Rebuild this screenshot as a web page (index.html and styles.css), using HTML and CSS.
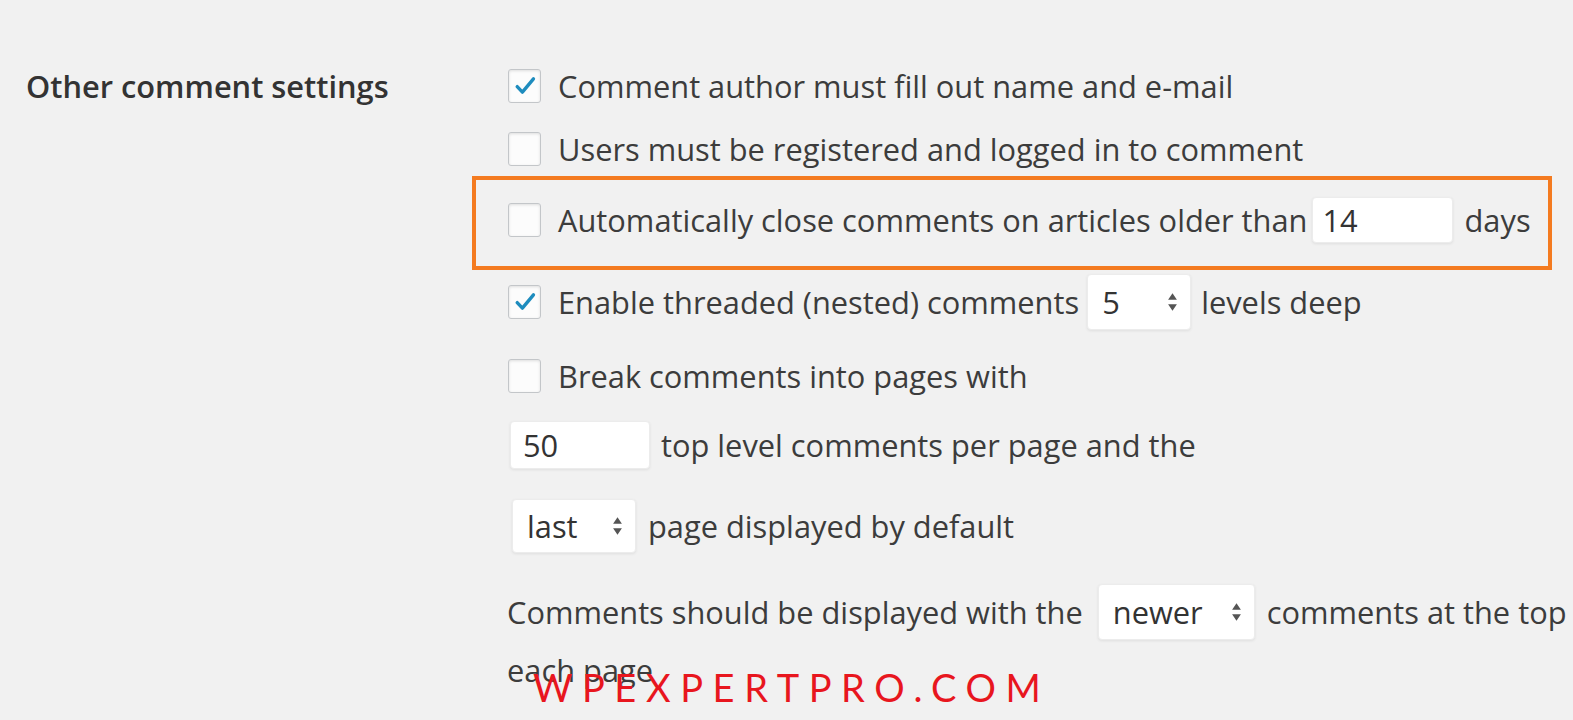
FILE: index.html
```html
<!DOCTYPE html>
<html>
<head>
<meta charset="utf-8">
<link rel="stylesheet" href="styles.css">
</head>
<body>
<div class="page">
  <div class="label-col">Other comment settings</div>
  <div class="field-col">
    <div class="row r1">
      <span class="cb checked"><svg viewBox="0 0 20 20"><path d="M4 10.5l4 4.2L16.5 4.5" fill="none" stroke="#1e8cbe" stroke-width="2.6" stroke-linecap="round" stroke-linejoin="round"/></svg></span>
      <span class="txt">Comment author must fill out name and e-mail</span>
    </div>
    <div class="row r2">
      <span class="cb"></span>
      <span class="txt">Users must be registered and logged in to comment</span>
    </div>
    <div class="highlight">
      <div class="row r3">
        <span class="cb"></span>
        <span class="txt">Automatically close comments on articles older than</span>
        <span class="input in14">14</span>
        <span class="txt days">days</span>
      </div>
    </div>
    <div class="row r4">
      <span class="cb checked"><svg viewBox="0 0 20 20"><path d="M4 10.5l4 4.2L16.5 4.5" fill="none" stroke="#1e8cbe" stroke-width="2.6" stroke-linecap="round" stroke-linejoin="round"/></svg></span>
      <span class="txt">Enable threaded (nested) comments</span>
      <span class="select sel5">5<span class="arrows"><svg viewBox="0 0 10 20"><path d="M5 2L9 8H1z M5 18L1 12h8z" fill="#555"/></svg></span></span>
      <span class="txt after-sel">levels deep</span>
    </div>
    <div class="row r5">
      <span class="cb"></span>
      <span class="txt">Break comments into pages with</span>
    </div>
    <div class="row r6">
      <span class="input in50">50</span>
      <span class="txt after-50">top level comments per page and the</span>
    </div>
    <div class="row r7">
      <span class="select sellast">last<span class="arrows"><svg viewBox="0 0 10 20"><path d="M5 2L9 8H1z M5 18L1 12h8z" fill="#555"/></svg></span></span>
      <span class="txt after-last">page displayed by default</span>
    </div>
    <div class="row r8">
      <span class="txt">Comments should be displayed with the</span>
      <span class="select selnewer">newer<span class="arrows"><svg viewBox="0 0 10 20"><path d="M5 2L9 8H1z M5 18L1 12h8z" fill="#555"/></svg></span></span>
      <span class="txt after-newer">comments at the top of</span>
    </div>
    <div class="row r9">
      <span class="txt">each page</span>
    </div>
  </div>
</div>
<div class="watermark">WPEXPERTPRO.COM</div>
</body>
</html>
```
FILE: styles.css
```css
html, body {
  margin: 0;
  padding: 0;
  background: #f1f1f1;
  overflow: hidden;
  width: 1573px;
  height: 720px;
}
body {
  position: relative;
  font-family: "Open Sans", "Liberation Sans", sans-serif;
  font-size: 30.8px;
  color: #3c3c3c;
}
.page {
  display: flex;
  align-items: flex-start;
}
.label-col {
  width: 507px;
  flex: none;
  box-sizing: border-box;
  padding-left: 26px;
  padding-top: 64px;
  font-weight: 600;
  color: #333;
  line-height: 44px;
  white-space: nowrap;
}
.field-col {
  display: flex;
  flex-direction: column;
  padding-top: 64px;
  white-space: nowrap;
}
.row {
  display: flex;
  align-items: center;
  height: 44px;
}
.txt {
  line-height: 44px;
}
.cb {
  width: 33px;
  height: 34px;
  box-sizing: border-box;
  border: 1.5px solid #c3c6c9;
  border-radius: 3px;
  background: #fcfcfc;
  box-shadow: inset 0 1px 3px rgba(0,0,0,0.12);
  margin-left: 1px;
  margin-right: 17px;
  display: flex;
  align-items: center;
  justify-content: center;
  flex: none;
}
.cb svg {
  width: 26px;
  height: 26px;
}
.r2 { margin-top: 19px; }
.highlight {
  margin-left: -35px;
  width: 1080px;
  height: 94px;
  box-sizing: border-box;
  border: 4px solid #f47b20;
  margin-top: 5px;
  display: flex;
  align-items: center;
  padding-left: 31px;
  padding-bottom: 6px;
}
.input, .select {
  background: #fff;
  border-radius: 4px;
  box-shadow: 0 1px 3px rgba(0,0,0,0.08);
  border: 1px solid #ececec;
  box-sizing: border-box;
  display: flex;
  align-items: center;
  flex: none;
  color: #333;
}
.in14 {
  width: 141px;
  height: 46px;
  margin-left: 4px;
  padding-left: 10px;
}
.days { margin-left: 12px; }
.r4 { height: 56px; margin-top: 4px; }
.select {
  position: relative;
  padding-left: 14px;
}
.arrows {
  position: absolute;
  right: 12px;
  top: 50%;
  transform: translateY(-50%);
  width: 11px;
  height: 22px;
  display: flex;
}
.arrows svg { width: 11px; height: 22px; }
.sel5 {
  width: 104px;
  height: 56px;
  margin-left: 8px;
}
.after-sel { margin-left: 10px; }
.r5 { margin-top: 24px; }
.r6 { height: 48px; margin-top: 23px; }
.in50 {
  width: 140px;
  height: 48px;
  margin-left: 3px;
  padding-left: 12px;
}
.after-50 { margin-left: 11px; }
.r7 { height: 54px; margin-top: 30px; }
.sellast {
  width: 124px;
  height: 54px;
  margin-left: 5px;
}
.after-last { margin-left: 12px; }
.r8 { height: 56px; margin-top: 31px; }
.selnewer {
  width: 157px;
  height: 56px;
  margin-left: 15px;
}
.after-newer { margin-left: 12px; }
.r9 { height: 40px; margin-top: 10px; }
.watermark {
  position: absolute;
  left: 533px;
  top: 662px;
  font-family: "Lato", "DejaVu Sans", sans-serif;
  font-size: 38px;
  letter-spacing: 9.6px;
  color: #e8161e;
  line-height: 50px;
  white-space: nowrap;
}
```
